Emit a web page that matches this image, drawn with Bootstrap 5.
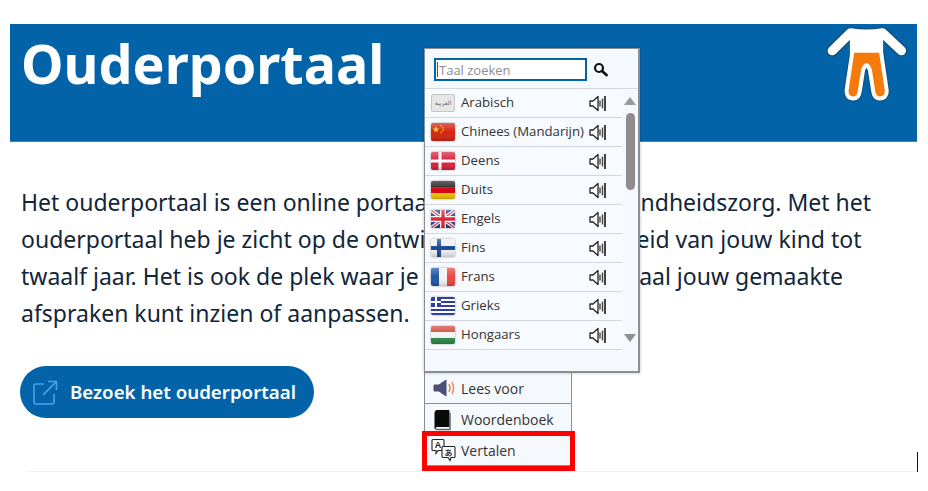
<!DOCTYPE html>
<html lang="nl">
<head>
  <meta charset="UTF-8" />
  <meta name="viewport" content="width=device-width, initial-scale=1.0" />
  <title>Ouderportaal</title>
  <link href="https://cdn.jsdelivr.net/npm/bootstrap@5.3.0/dist/css/bootstrap.min.css" rel="stylesheet" />
  <style>
    body, html {
      margin: 0;
      background: #fff;
      height: 491px;
      overflow: hidden;
    }
    body {
      font-family: "Noto Sans", sans-serif;
      position: relative;
      color: #12263a;
    }
    /* Page */
    .page-wrap {
      padding: 24px 11px 0 10px;
    }
    .hero-band {
      background: #0263a8;
      height: 118px;
      border-bottom: 1px solid #3a82bb;
      padding: 0 9px 0 11px;
    }
    .hero-title {
      font-family: "Noto Sans", sans-serif;
      font-weight: 700;
      font-size: 53.8px;
      line-height: 78px;
      color: #fff;
      margin: 0;
    }
    .intro-text {
      font-size: 23px;
      line-height: 37px;
      margin: 42px 0 0 11px;
      color: #12263a;
      white-space: nowrap;
    }
    .visit-btn {
      background: #0263a8;
      color: #fff;
      font-weight: 600;
      font-size: 18.7px;
      height: 52px;
      width: 294px;
      margin: 34px 0 0 10px;
      border-radius: 26px;
      padding: 0 0 0 13px;
      gap: 12px;
      border: 0;
    }
    .visit-btn:hover { background: #0263a8; color: #fff; }
    .page-rule {
      border-top: 1px solid #eef3f8;
      margin: 53px 0 0 17px;
    }
    .cursor-bar {
      position: absolute;
      left: 917px;
      top: 452px;
      width: 1px;
      height: 20px;
      background: #111;
    }
    /* Reader toolbar and language menu */
    .reader-tool {
      position: absolute;
      left: 424px;
      top: 48px;
      font-family: "Open Sans", "Noto Sans", sans-serif;
      color: #333;
      font-size: 14px;
    }
    .lang-panel {
      width: 216px;
      height: 325px;
      background: #f5f9fd;
      border: 1px solid #8a8f94;
      border-right-width: 2px;
      border-bottom-width: 2px;
      box-shadow: 0 0 3px rgba(0,0,0,.25);
      position: relative;
      z-index: 2;
    }
    .lang-search {
      height: 40px;
      padding: 9px 0 0 9px;
      border-bottom: 1px solid #d4d8dc;
      gap: 6px;
    }
    .lang-input {
      width: 153px;
      height: 23px;
      border: 2px solid #0263a8;
      border-radius: 0;
      padding: 0 0 0 3px;
      font-size: 13px;
      background: linear-gradient(#555, #555) 1px center / 1px 15px no-repeat #fff;
      outline: 0;
      font-family: inherit;
    }
    .lang-input::placeholder { color: #8d8d8d; opacity: 1; }
    .lang-list {
      width: 197px;
      list-style: none;
      margin: 0;
      padding: 0;
      font-size: 13.2px;
    }
    .lang-row {
      height: 29px;
      border-bottom: 1px solid #d4d8dc;
      padding: 0 15px 0 6px;
      gap: 6px;
      background: #f7fafe;
    }
    .lang-row svg.lang-flag {
      width: 24px;
      height: 18px;
      flex: none;
      border-radius: 2px;
      box-shadow: 0 0 2px rgba(0,0,0,.45);
    }
    .lang-name { flex: 1; min-width: 0; white-space: nowrap; }
    .sound-icon { width: 18px; height: 17px; flex: none; }
    .arab-flag {
      width: 24px;
      height: 18px;
      flex: none;
      background: #e6e6e4;
      border: 1px solid #c6c6c4;
      border-radius: 2px;
      font-size: 6px;
      line-height: 16px;
      text-align: center;
      color: #666;
      font-family: "DejaVu Sans", sans-serif;
      overflow: hidden;
    }
    .lang-scroll {
      position: absolute;
      left: 199px;
      top: 40px;
      width: 14px;
      height: 260px;
    }
    .scroll-thumb {
      position: absolute;
      left: 2px;
      top: 24px;
      width: 9px;
      height: 77px;
      background: #8e8e8e;
      border-radius: 5px;
    }
    .scroll-up, .scroll-down {
      position: absolute;
      left: 0;
      width: 0;
      height: 0;
      border-left: 6px solid transparent;
      border-right: 6px solid transparent;
    }
    .scroll-up { top: 8px; border-bottom: 8px solid #9a9a9a; }
    .scroll-down { bottom: 7px; border-top: 8px solid #8e8e8e; }
    .tool-list {
      width: 148px;
      background: #f5f9fd;
      border: 1px solid #8a8f94;
      border-top: 0;
      border-bottom: 0;
    }
    .tool-row {
      height: 31px;
      border-bottom: 1px solid #8a8f94;
      padding-left: 4px;
      gap: 5px;
    }
    .tool-row svg { width: 27px; height: 24px; flex: none; }
    .translate-mark {
      position: absolute;
      left: -3px;
      bottom: -5px;
      width: 153px;
      height: 40px;
      border: 5px solid #fe0000;
    }
  </style>
</head>
<body>
  <svg width="0" height="0" class="position-absolute">
    <defs>
      <linearGradient id="gloss" x1="0" y1="0" x2="0" y2="1">
        <stop offset="0" stop-color="#fff" stop-opacity=".3"/>
        <stop offset=".5" stop-color="#fff" stop-opacity="0"/>
        <stop offset="1" stop-color="#000" stop-opacity=".18"/>
      </linearGradient>
    </defs>
    <symbol id="sound" viewBox="0 0 18 17">
      <path d="M1 6h3l5-4.500v14L4 11H1z" fill="#fff" stroke="#222" stroke-width="1.300" stroke-linejoin="round"/>
      <path d="M11 5.500v6M13.500 3.500v10" stroke="#444" stroke-width="1.400" fill="none"/>
      <path d="M16 1v15" stroke="#444" stroke-width="2" fill="none"/>
    </symbol>
  </svg>

  <div class="page-wrap">
    <!-- Blue header -->
    <div class="hero-band d-flex justify-content-between align-items-start">
      <h1 class="hero-title">Ouderportaal</h1>
      <svg width="83" height="80" viewBox="75 42 250 240">
        <path d="M97 122L152 68Q200 76 248 68L305 122" fill="none" stroke="#10507f" stroke-width="36" stroke-linecap="round" stroke-linejoin="round"/>
        <path d="M163 128H238L255 242Q256 260 240 260Q228 260 226 242L216 178Q200 140 184 178L174 242Q172 260 160 260Q145 260 146 242Z" fill="#10507f" stroke="#10507f" stroke-width="30" stroke-linejoin="round"/>
        <path d="M97 122L152 68Q200 76 248 68L305 122" fill="none" stroke="#fff" stroke-width="28" stroke-linecap="round" stroke-linejoin="round"/>
        <path d="M150 60Q200 68 250 60V135H150Z" fill="#fff"/>
        <path d="M163 128H238L255 242Q256 260 240 260Q228 260 226 242L216 178Q200 140 184 178L174 242Q172 260 160 260Q145 260 146 242Z" fill="#f47a0a" stroke="#fff" stroke-width="24" stroke-linejoin="round" paint-order="stroke"/>
      </svg>
    </div>

    <p class="intro-text">Het ouderportaal is een online portaal voor de jeugdgezondheidszorg. Met het<br>ouderportaal heb je zicht op de ontwikkeling en gezondheid van jouw kind tot<br>twaalf jaar. Het is ook de plek waar je bijvoorbeeld al digitaal jouw gemaakte<br>afspraken kunt inzien of aanpassen.</p>

    <a href="#" class="btn visit-btn d-inline-flex align-items-center">
      <svg width="25" height="25" viewBox="0 0 25 25" fill="none" stroke="#4da3ea" stroke-width="1.600">
        <path d="M11 4H3a2 2 0 0 0-2 2v16a2 2 0 0 0 2 2h16a2 2 0 0 0 2-2v-8"/>
        <path d="M10 15L23 2M15 1.500h8.500V10"/>
      </svg>
      Bezoek het ouderportaal
    </a>

    <div class="page-rule"></div>
  </div>
  <div class="cursor-bar"></div>

  <!-- Reader toolbar, opened on the language menu -->
  <div class="reader-tool">
    <div class="lang-panel">
      <div class="lang-search d-flex align-items-start">
        <input class="lang-input" type="text" placeholder="Taal zoeken" />
        <svg class="mt-1" width="15" height="15" viewBox="0 0 15 15" fill="none" stroke="#111">
          <circle cx="6" cy="6" r="4" stroke-width="2.200"/>
          <path d="M9 9l4.500 4" stroke-width="2.800" stroke-linecap="round"/>
        </svg>
      </div>
      <ul class="lang-list">
        <li class="lang-row d-flex align-items-center">
          <span class="arab-flag">العربية</span>
          <span class="lang-name">Arabisch</span>
          <svg class="sound-icon"><use href="#sound"/></svg>
        </li>
        <li class="lang-row d-flex align-items-center">
          <svg class="lang-flag" viewBox="0 0 24 18"><rect width="24" height="18" fill="#d4230f"/><path d="M5 3l.9 2.400 2.500.1-2 1.500.7 2.400L5 8l-2.100 1.400.7-2.400-2-1.500 2.500-.1z" fill="#fbd116"/><circle cx="10" cy="3" r=".8" fill="#fbd116"/><circle cx="12" cy="5" r=".8" fill="#fbd116"/><circle cx="12" cy="7.500" r=".8" fill="#fbd116"/><circle cx="10" cy="9.500" r=".8" fill="#fbd116"/><rect width="24" height="18" fill="url(#gloss)"/></svg>
          <span class="lang-name">Chinees (Mandarijn)</span>
          <svg class="sound-icon"><use href="#sound"/></svg>
        </li>
        <li class="lang-row d-flex align-items-center">
          <svg class="lang-flag" viewBox="0 0 24 18"><rect width="24" height="18" fill="#d8203a"/><path d="M0 9h24M9 0v18" stroke="#fff" stroke-width="3"/><rect width="24" height="18" fill="url(#gloss)"/></svg>
          <span class="lang-name">Deens</span>
          <svg class="sound-icon"><use href="#sound"/></svg>
        </li>
        <li class="lang-row d-flex align-items-center">
          <svg class="lang-flag" viewBox="0 0 24 18"><rect width="24" height="6" fill="#222"/><rect y="6" width="24" height="6" fill="#d8000f"/><rect y="12" width="24" height="6" fill="#f5c400"/><rect width="24" height="18" fill="url(#gloss)"/></svg>
          <span class="lang-name">Duits</span>
          <svg class="sound-icon"><use href="#sound"/></svg>
        </li>
        <li class="lang-row d-flex align-items-center">
          <svg class="lang-flag" viewBox="0 0 24 18"><rect width="24" height="18" fill="#28408e"/><path d="M0 0l24 18M24 0L0 18" stroke="#fff" stroke-width="3.500"/><path d="M0 0l24 18M24 0L0 18" stroke="#d8283c" stroke-width="1.200"/><path d="M12 0v18M0 9h24" stroke="#fff" stroke-width="6"/><path d="M12 0v18M0 9h24" stroke="#d8283c" stroke-width="3.400"/><rect width="24" height="18" fill="url(#gloss)"/></svg>
          <span class="lang-name">Engels</span>
          <svg class="sound-icon"><use href="#sound"/></svg>
        </li>
        <li class="lang-row d-flex align-items-center">
          <svg class="lang-flag" viewBox="0 0 24 18"><rect width="24" height="18" fill="#f0f0f0"/><path d="M0 9h24M8 0v18" stroke="#1c4a90" stroke-width="4"/><rect width="24" height="18" fill="url(#gloss)"/></svg>
          <span class="lang-name">Fins</span>
          <svg class="sound-icon"><use href="#sound"/></svg>
        </li>
        <li class="lang-row d-flex align-items-center">
          <svg class="lang-flag" viewBox="0 0 24 18"><rect width="8" height="18" fill="#1e55a8"/><rect x="8" width="8" height="18" fill="#f4f4f4"/><rect x="16" width="8" height="18" fill="#e8473f"/><rect width="24" height="18" fill="url(#gloss)"/></svg>
          <span class="lang-name">Frans</span>
          <svg class="sound-icon"><use href="#sound"/></svg>
        </li>
        <li class="lang-row d-flex align-items-center">
          <svg class="lang-flag" viewBox="0 0 24 18"><rect width="24" height="18" fill="#2f3f9e"/><path d="M0 3h24M0 7h24M0 11h24M0 15h24" stroke="#fff" stroke-width="2"/><rect width="10" height="10" fill="#2f3f9e"/><path d="M5 0v10M0 5h10" stroke="#fff" stroke-width="2"/></svg>
          <span class="lang-name">Grieks</span>
          <svg class="sound-icon"><use href="#sound"/></svg>
        </li>
        <li class="lang-row d-flex align-items-center">
          <svg class="lang-flag" viewBox="0 0 24 18"><rect width="24" height="6" fill="#d0453c"/><rect y="6" width="24" height="6" fill="#f4f4f4"/><rect y="12" width="24" height="6" fill="#2a8a4a"/><rect width="24" height="18" fill="url(#gloss)"/></svg>
          <span class="lang-name">Hongaars</span>
          <svg class="sound-icon"><use href="#sound"/></svg>
        </li>
      </ul>
      <div class="lang-scroll">
        <span class="scroll-up"></span>
        <span class="scroll-thumb"></span>
        <span class="scroll-down"></span>
      </div>
    </div>
    <div class="tool-list position-relative">
      <div class="tool-row d-flex align-items-center">
        <svg viewBox="0 0 27 24"><path d="M5 9h5l7-5v16l-7-5H5z" fill="#4a5078" stroke="#4a5078" stroke-linejoin="round"/><path d="M20 8q2 4 0 8M23 6q3 6 0 12" fill="none" stroke="#ee8a4a" stroke-width="1.500"/></svg>
        <span>Lees voor</span>
      </div>
      <div class="tool-row d-flex align-items-center">
        <svg viewBox="0 0 27 24"><path d="M6 5.500a2 2 0 0 1 2-2h12v16H8a2 2 0 0 0-2 2z" fill="#0a0a0a" stroke="#0a0a0a"/><path d="M6.500 21.500a1.500 1.500 0 0 0 1.500 1h13V6" fill="none" stroke="#666" stroke-width="1.500"/></svg>
        <span>Woordenboek</span>
      </div>
      <div class="tool-row d-flex align-items-center">
        <svg viewBox="0 0 27 24"><path d="M4 1.500h10a1 1 0 0 1 1 1v9a1 1 0 0 1-1 1H9l-2 3v-3H4a1 1 0 0 1-1-1v-9a1 1 0 0 1 1-1z" fill="#fff" stroke="#222" stroke-width="1.100"/><path d="M15 8.500h10a1 1 0 0 1 1 1v9a1 1 0 0 1-1 1h-3l-1 3-2-3h-5a1 1 0 0 1-1-1v-9a1 1 0 0 1 1-1z" fill="#fff" stroke="#222" stroke-width="1.100"/><text x="9" y="10" text-anchor="middle" font-size="9" font-weight="700" fill="#222" font-family="Liberation Sans, sans-serif">A</text><text x="19.500" y="18" text-anchor="middle" font-size="8" font-weight="700" fill="#333" font-family="Noto Sans CJK JP, sans-serif">あ</text></svg>
        <span>Vertalen</span>
      </div>
      <div class="translate-mark"></div>
    </div>
  </div>
  <script src="https://cdn.jsdelivr.net/npm/bootstrap@5.3.0/dist/js/bootstrap.bundle.min.js"></script>
</body>
</html>
